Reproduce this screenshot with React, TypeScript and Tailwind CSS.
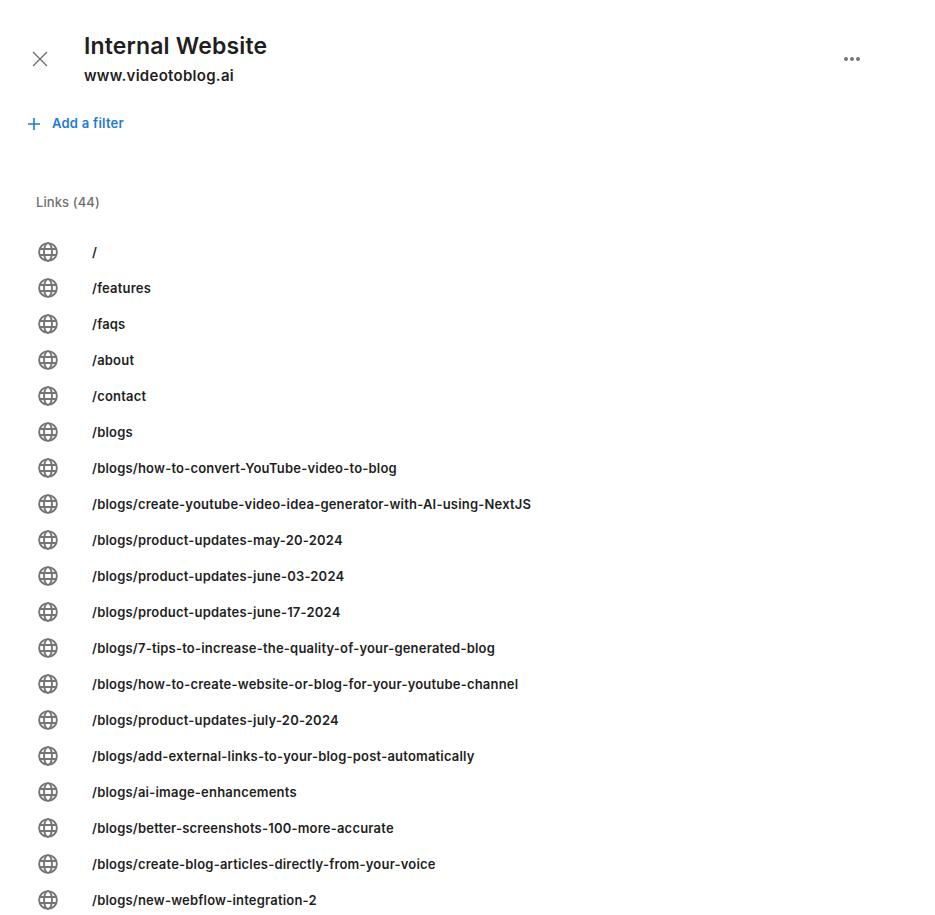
const links = [
  "/",
  "/features",
  "/faqs",
  "/about",
  "/contact",
  "/blogs",
  "/blogs/how-to-convert-YouTube-video-to-blog",
  "/blogs/create-youtube-video-idea-generator-with-AI-using-NextJS",
  "/blogs/product-updates-may-20-2024",
  "/blogs/product-updates-june-03-2024",
  "/blogs/product-updates-june-17-2024",
  "/blogs/7-tips-to-increase-the-quality-of-your-generated-blog",
  "/blogs/how-to-create-website-or-blog-for-your-youtube-channel",
  "/blogs/product-updates-july-20-2024",
  "/blogs/add-external-links-to-your-blog-post-automatically",
  "/blogs/ai-image-enhancements",
  "/blogs/better-screenshots-100-more-accurate",
  "/blogs/create-blog-articles-directly-from-your-voice",
  "/blogs/new-webflow-integration-2",
];

function Globe() {
  return (
    <svg width="20" height="20" viewBox="0 0 20 20" fill="none" stroke="#757575" strokeWidth="1.9">
      <circle cx="10" cy="10" r="8.9" />
      <ellipse cx="10" cy="10" rx="4" ry="8.9" />
      <path d="M1.6 7h16.8M1.6 13h16.8" />
    </svg>
  );
}

export default function App() {
  return (
    <div className="h-[915px] overflow-hidden bg-white font-['Inter',sans-serif] text-[#1f1f1f]">
      <header className="flex items-start pt-[30px] pl-[32px] pr-[74px]">
        <svg className="mt-[21px] shrink-0" width="16" height="16" viewBox="0 0 16 16" stroke="#6e6e6e" strokeWidth="1.4" fill="none">
          <path d="M1 1l14 14M15 1L1 15" />
        </svg>
        <div className="ml-[36px] flex-1">
          <h1 className="text-[23px] leading-[32px] font-semibold tracking-[0.15px]">Internal Website</h1>
          <p className="mt-[3px] text-[15px] leading-[22px] font-semibold tracking-[0.28px]">www.videotoblog.ai</p>
        </div>
        <svg className="mt-[26px]" width="18" height="6" viewBox="0 0 18 6" fill="#757575">
          <circle cx="3" cy="3" r="2" />
          <circle cx="9" cy="3" r="2" />
          <circle cx="15" cy="3" r="2" />
        </svg>
      </header>
      <div className="mt-[27px] flex h-[20px] items-center pl-[28px] text-[13px] font-semibold tracking-[0.25px] text-[#1f7ad6]">
        <svg width="12" height="12" viewBox="0 0 12 12" stroke="#1f7ad6" strokeWidth="1.6" fill="none">
          <path d="M6 0v12M0 6h12" />
        </svg>
        <span className="ml-[12px]">Add a filter</span>
      </div>
      <h2 className="mt-[58px] pl-[36px] text-[13px] leading-[20px] font-medium tracking-[0.1px] text-[#6f6f6f]">Links (44)</h2>
      <ul className="mt-[22px]">
        {links.map((l) => (
          <li key={l} className="flex h-[36px] items-center pl-[38px]">
            <Globe />
            <span className="ml-[34px] text-[13px] leading-[18px] font-semibold tracking-[0.2px]">{l}</span>
          </li>
        ))}
      </ul>
    </div>
  );
}
